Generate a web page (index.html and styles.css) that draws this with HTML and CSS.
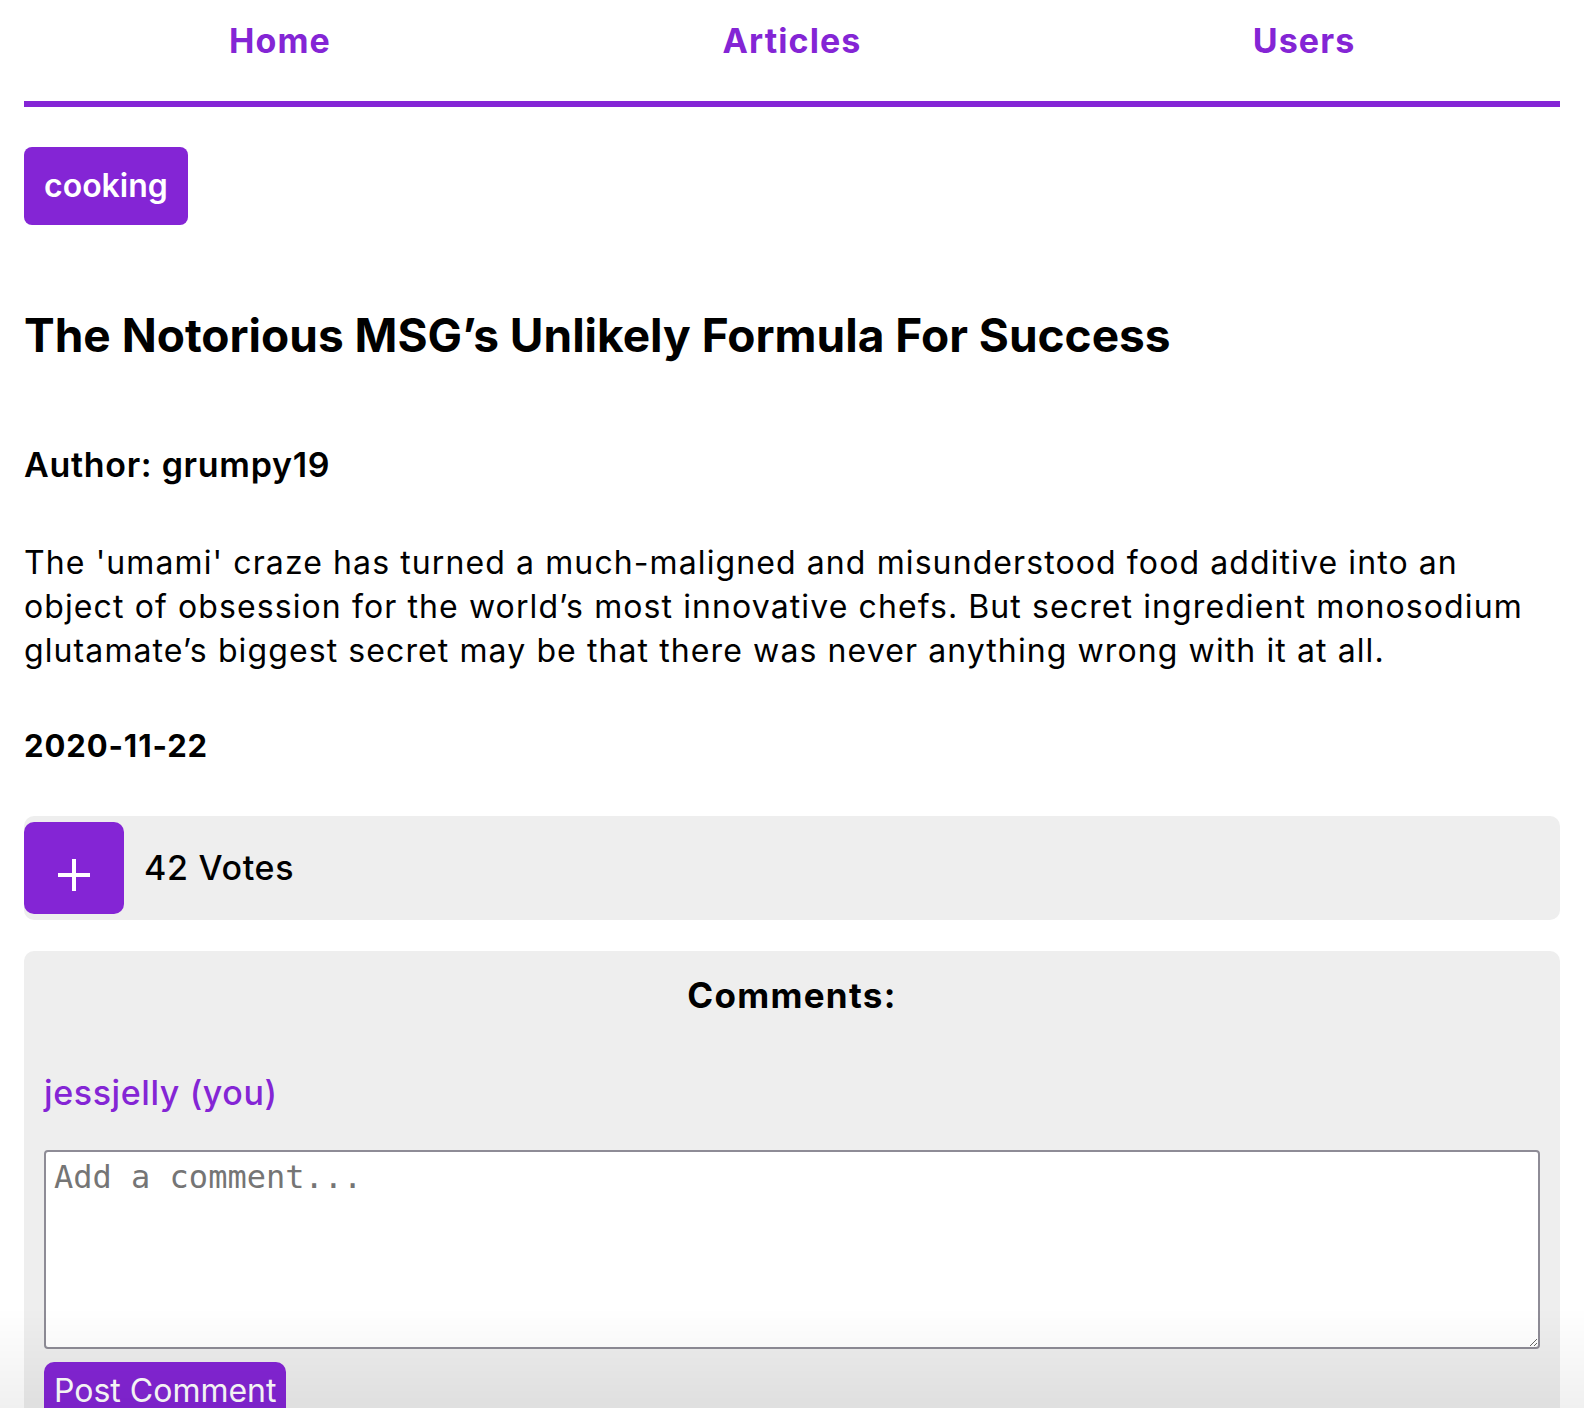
FILE: index.html
```html
<!DOCTYPE html>
<html lang="en">
<head>
<meta charset="utf-8">
<title>The Notorious MSG’s Unlikely Formula For Success</title>
<link rel="stylesheet" href="styles.css">
</head>
<body>
<div class="page">
  <nav class="nav">
    <a class="nav-link" href="#">Home</a>
    <a class="nav-link" href="#">Articles</a>
    <a class="nav-link" href="#">Users</a>
  </nav>

  <main class="article">
    <a class="topic" href="#">cooking</a>
    <h1 class="title">The Notorious MSG’s Unlikely Formula For Success</h1>
    <h3 class="author">Author: grumpy19</h3>
    <p class="body">The 'umami' craze has turned a much-maligned and misunderstood food additive into an object of obsession for the world’s most innovative chefs. But secret ingredient monosodium glutamate’s biggest secret may be that there was never anything wrong with it at all.</p>
    <h4 class="date">2020-11-22</h4>

    <div class="votes">
      <button class="vote-btn" aria-label="Vote up">
        <svg width="32" height="32" viewBox="0 0 32 32"><path d="M16 0V32M0 16H32" stroke="#fff" stroke-width="4" fill="none"/></svg>
      </button>
      <span class="vote-count">42 Votes</span>
    </div>

    <section class="comments">
      <h2 class="comments-title">Comments:</h2>
      <p class="you">jessjelly (you)</p>
      <textarea class="comment-input" placeholder="Add a comment..."></textarea>
      <button class="post-btn">Post Comment</button>
    </section>
  </main>
</div>
<div class="bottom-shade"></div>
</body>
</html>
```

FILE: styles.css
```css
html, body {
  margin: 0;
  padding: 0;
  background: #ffffff;
}

body {
  font-family: Inter, "Noto Sans", "Liberation Sans", sans-serif;
  color: #000;
}

.page {
  padding: 0 24px;
}

.nav {
  display: grid;
  grid-template-columns: 1fr 1fr 1fr;
  padding: 21px 0 40px;
  border-bottom: 6px solid #8425d5;
}

.nav-link {
  text-align: center;
  font-size: 34px;
  line-height: 40px;
  font-weight: 700;
  letter-spacing: 1.1px;
  color: #8425d5;
  text-decoration: none;
}

.article {
  display: flex;
  flex-direction: column;
  align-items: stretch;
}

.topic {
  align-self: flex-start;
  margin-top: 40px;
  padding: 20px 20px;
  background: #8425d5;
  color: #fff;
  font-size: 32px;
  line-height: 38px;
  font-weight: 600;
  border-radius: 8px;
  text-decoration: none;
}

.title {
  margin: 82px 0 0;
  font-size: 46px;
  line-height: 56px;
  font-weight: 700;
}

.author {
  margin: 82px 0 0;
  font-size: 34px;
  line-height: 40px;
  font-weight: 600;
  letter-spacing: 0.7px;
}

.body {
  margin: 56px 0 0;
  font-size: 32px;
  line-height: 44px;
  font-weight: 400;
  letter-spacing: 1.1px;
}

.date {
  margin: 54px 0 0;
  font-size: 31px;
  line-height: 38px;
  font-weight: 700;
  letter-spacing: 0.9px;
}

.votes {
  margin-top: 51px;
  display: flex;
  align-items: center;
  gap: 20px;
  padding: 6px 0;
  background: #eeeeee;
  border-radius: 10px;
}

.vote-btn {
  width: 100px;
  height: 92px;
  border: none;
  border-radius: 10px;
  background: #8425d5;
  display: flex;
  justify-content: center;
  align-items: center;
  padding: 13px 0 0;
  cursor: pointer;
}

.vote-count {
  font-size: 34px;
  line-height: 40px;
  font-weight: 500;
  letter-spacing: 0.7px;
}

.comments {
  margin-top: 31px;
  background: #eeeeee;
  border-radius: 10px;
  padding: 24px 20px 40px;
  display: flex;
  flex-direction: column;
  align-items: stretch;
}

.comments-title {
  margin: 0;
  text-align: center;
  font-size: 35px;
  line-height: 40px;
  font-weight: 700;
  letter-spacing: 1.3px;
}

.you {
  margin: 58px 0 0;
  font-size: 34px;
  line-height: 40px;
  font-weight: 500;
  letter-spacing: 0.6px;
  color: #8425d5;
}

.comment-input {
  margin-top: 37px;
  box-sizing: border-box;
  height: 199px;
  width: 100%;
  padding: 6px 8px;
  border: 2px solid #8e8c96;
  border-radius: 4px;
  background: #fff;
  font-family: "DejaVu Sans Mono", "Liberation Mono", monospace;
  font-size: 32px;
  color: #000;
}

.comment-input::placeholder {
  color: #757575;
}

.post-btn {
  align-self: flex-start;
  margin-top: 13px;
  padding: 10px 10px;
  border: none;
  border-radius: 10px;
  background: #8425d5;
  color: #fff;
  font-family: Inter, "Noto Sans", "Liberation Sans", sans-serif;
  font-size: 32px;
  line-height: 38px;
  font-weight: 400;
}

.bottom-shade {
  position: fixed;
  left: 0;
  right: 0;
  bottom: 0;
  height: 100px;
  pointer-events: none;
  background: linear-gradient(to bottom, rgba(0,0,0,0), rgba(0,0,0,0.06));
}
```
